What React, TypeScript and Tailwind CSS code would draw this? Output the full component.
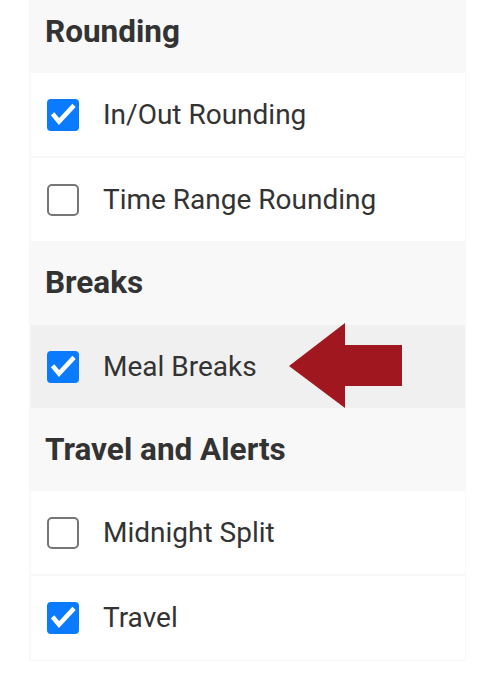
import React from "react";

function Check({ checked }: { checked: boolean }) {
  if (checked) {
    return (
      <div className="w-[32px] h-[32px] rounded-[4px] bg-[#0a7bff] flex items-center justify-center shrink-0">
        <svg width="32" height="32" viewBox="0 0 32 32">
          <path d="M7 16.5 L12 22.5 L25.5 8" fill="none" stroke="#ffffff" strokeWidth="4.5" strokeLinecap="square" strokeLinejoin="miter" />
        </svg>
      </div>
    );
  }
  return <div className="w-[32px] h-[32px] rounded-[5px] border-2 border-[#767676] bg-white shrink-0" />;
}

function Row({ label, checked, shaded, tall, children }: { label: string; checked: boolean; shaded?: boolean; tall?: boolean; children?: React.ReactNode }) {
  return (
    <div className={`relative flex items-center ${tall ? "h-[84px]" : "h-[83px]"} pl-[16px] gap-[24px] ${shaded ? "bg-[#f0f0f0]" : "bg-white"}`}>
      <Check checked={checked} />
      <span className="text-[28px] text-[#333333] leading-none">{label}</span>
      {children}
    </div>
  );
}

function Heading({ title, className }: { title: string; className?: string }) {
  return (
    <div className={`flex items-center pl-[14px] ${className ?? "h-[83px]"}`}>
      <span className="text-[31.5px] font-bold text-[#333333] leading-none">{title}</span>
    </div>
  );
}

export default function App() {
  return (
    <div className="w-[482px] h-[680px] bg-white" style={{ fontFamily: "Roboto, 'Noto Sans', sans-serif" }}>
      <div className="ml-[29px] w-[437px] bg-[#f8f8f8] pl-[2px] pr-[1px] pb-[1px] flex flex-col">
        <Heading title="Rounding" className="h-[73px] pb-[10px]" />
        <div className="flex flex-col gap-[2px]">
          <Row label="In/Out Rounding" checked />
          <Row label="Time Range Rounding" checked={false} />
        </div>
        <Heading title="Breaks" className="h-[84px]" />
        <Row label="Meal Breaks" checked shaded>
          <svg className="absolute left-[258px] top-[-2px]" width="113" height="85" viewBox="0 0 113 85">
            <polygon points="0,43 56,0 56,22 113,22 113,63 56,63 56,85" fill="#a0171f" />
          </svg>
        </Row>
        <Heading title="Travel and Alerts" />
        <div className="flex flex-col gap-[2px]">
          <Row label="Midnight Split" checked={false} />
          <Row label="Travel" checked tall />
        </div>
      </div>
    </div>
  );
}
